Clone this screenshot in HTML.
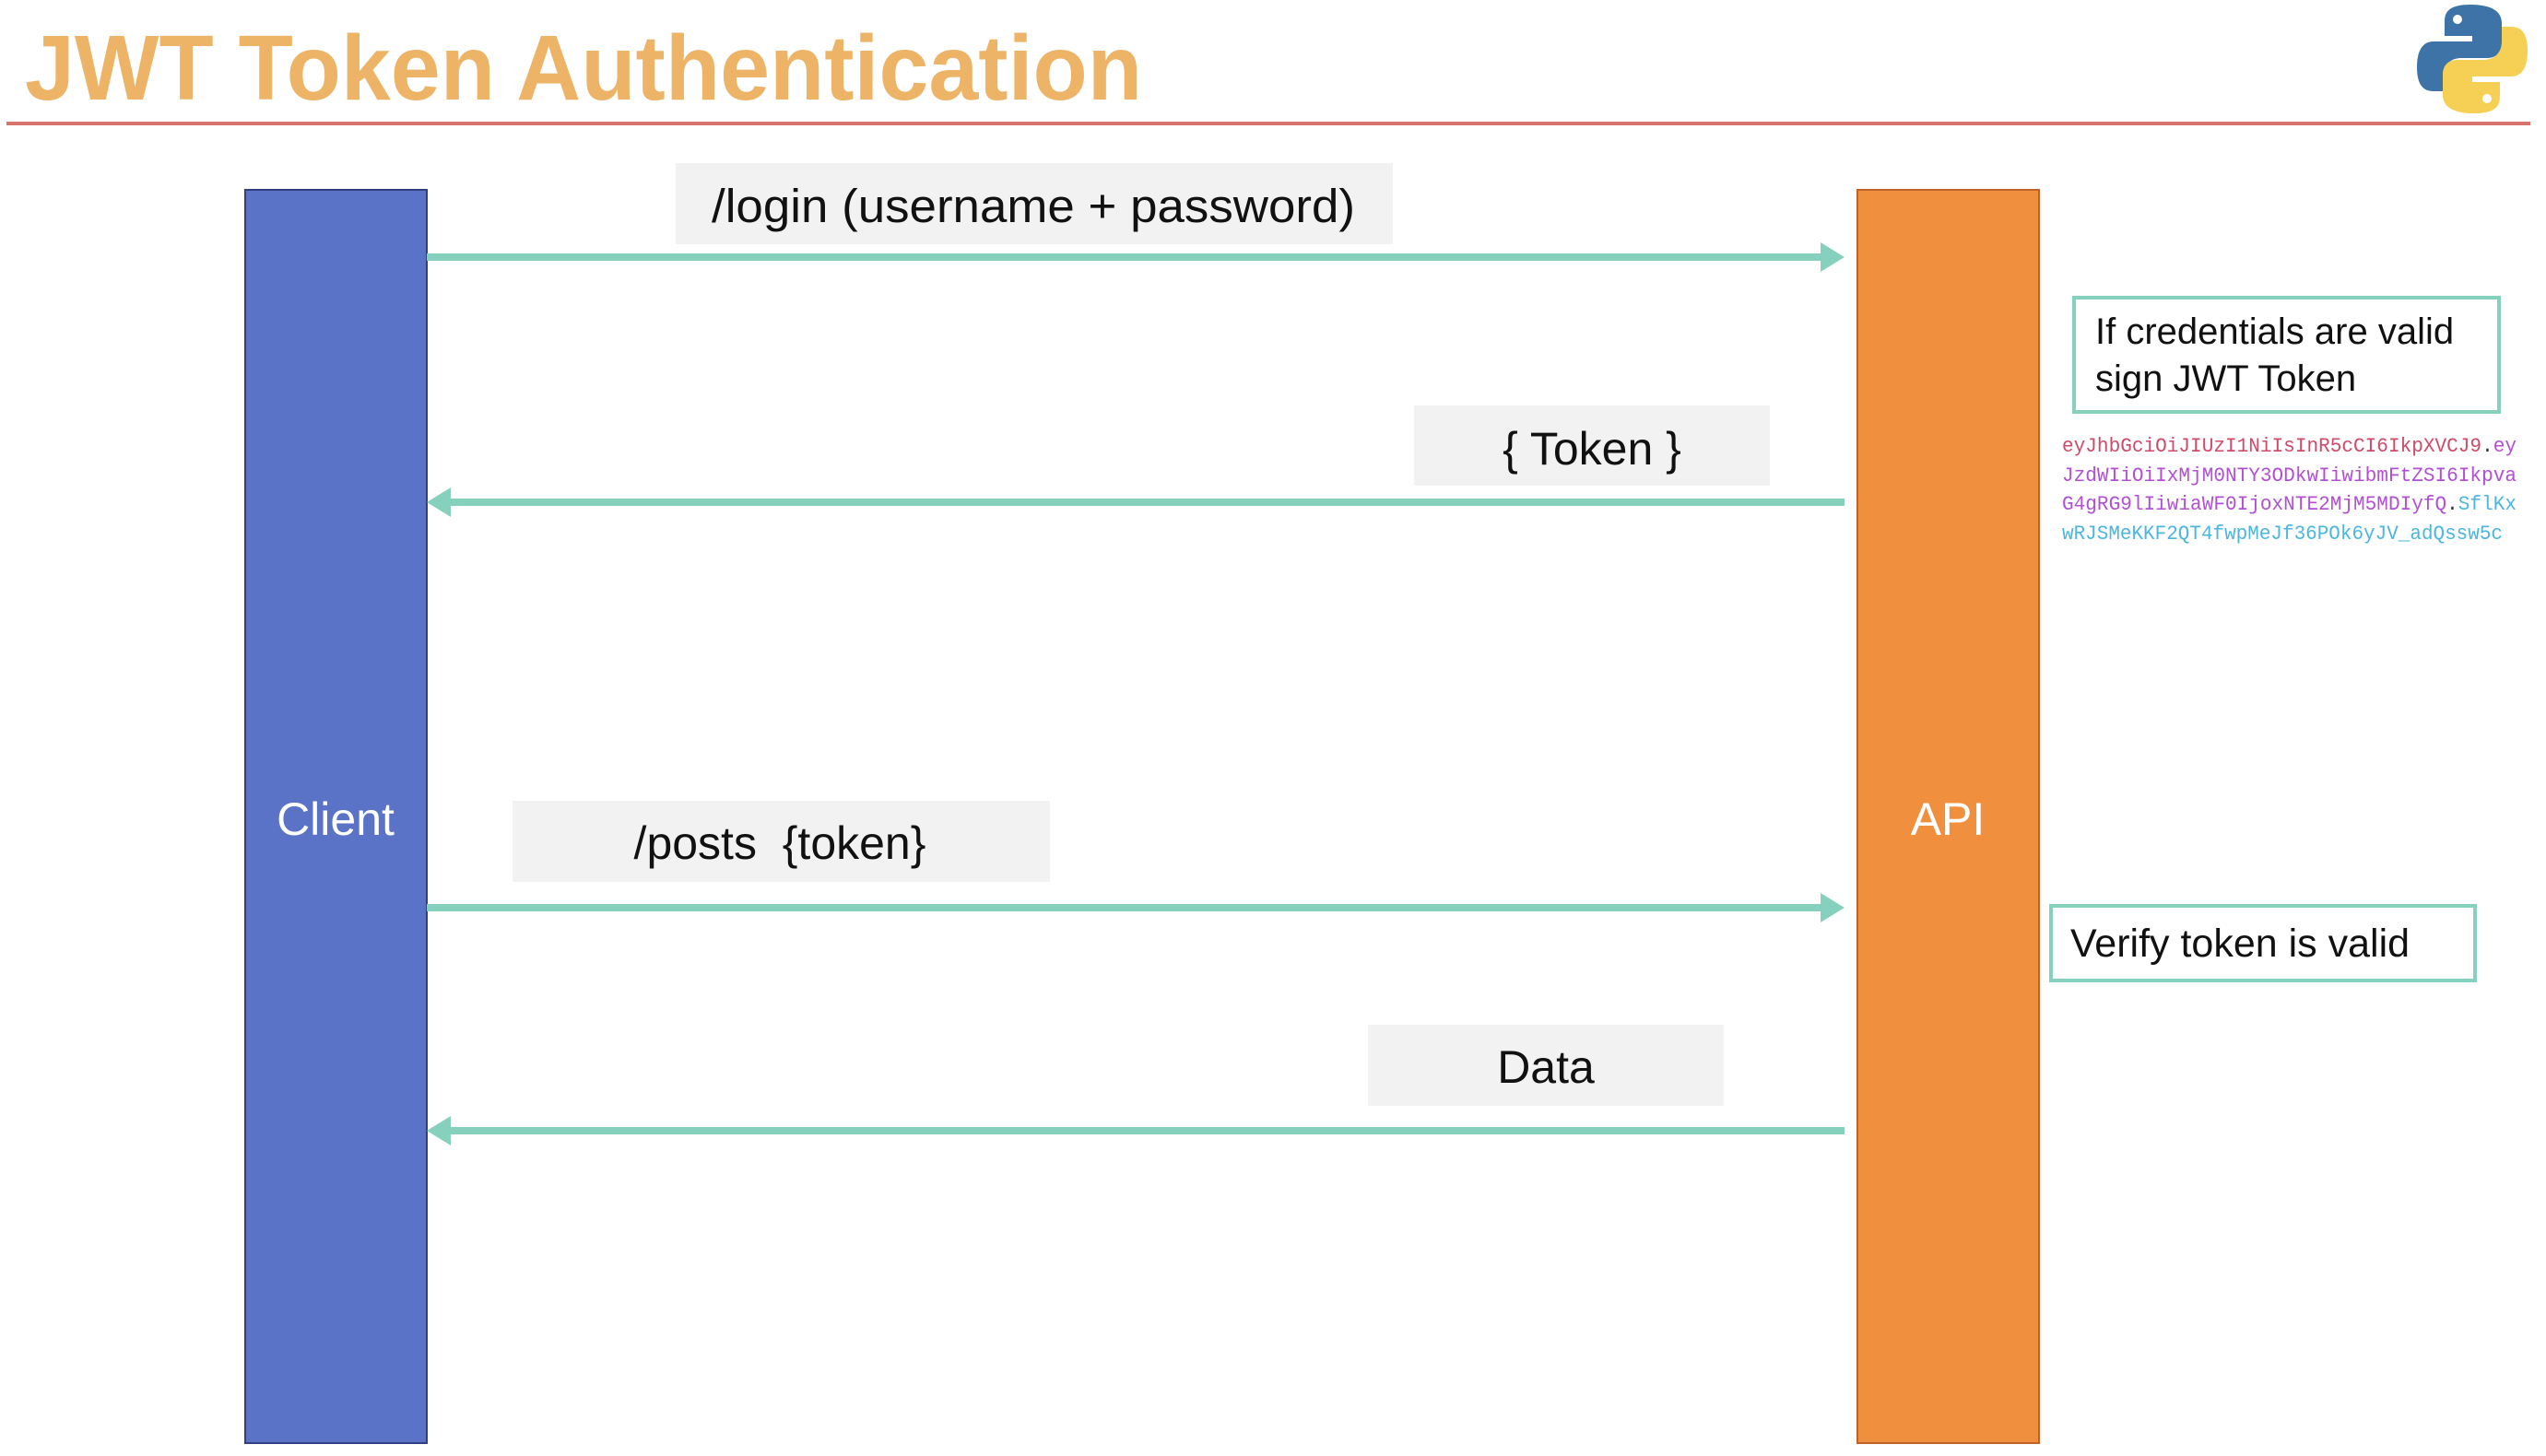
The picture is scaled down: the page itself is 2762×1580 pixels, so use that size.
<!DOCTYPE html>
<html><head><meta charset="utf-8"><style>
html,body{margin:0;padding:0;background:#fff;}
svg{display:block}
</style></head><body>
<svg width="2762" height="1580" viewBox="0 0 2762 1580" xmlns="http://www.w3.org/2000/svg">
<rect width="2762" height="1580" fill="#fff"/>
<text x="27" y="108" font-family="Liberation Sans, sans-serif" font-weight="bold" font-size="100" fill="#EDB467" textLength="1212" lengthAdjust="spacingAndGlyphs">JWT Token Authentication</text>
<rect x="7" y="132" width="2738" height="4" fill="#D8736E"/>
<!-- python logo -->
<g transform="translate(2622,5) scale(1.0)">
<path d="M58 0 C30 0 30 12 30 20 V34 H60 V40 H18 C6 40 0 50 0 68 C0 86 6 94 18 94 H28 V78 C28 66 36 58 48 58 H76 C86 58 92 52 92 42 V20 C92 8 82 0 58 0 Z" fill="#3E73A8"/>
<circle cx="44" cy="16" r="5" fill="#fff"/>
<path d="M62 118 C90 118 90 106 90 98 V84 H60 V78 H102 C114 78 120 68 120 50 C120 32 114 24 102 24 H92 V40 C92 52 84 60 72 60 H44 C34 60 28 66 28 76 V98 C28 110 38 118 62 118 Z" fill="#F6CF55"/>
<circle cx="76" cy="102" r="5" fill="#fff"/>
</g>
<!-- bars -->
<rect x="266" y="206" width="197" height="1360" fill="#5B73C6" stroke="#2F3F80" stroke-width="2"/>
<rect x="2015" y="206" width="197" height="1360" fill="#F0903F" stroke="#C0622A" stroke-width="2"/>
<text x="364" y="906" text-anchor="middle" font-family="Liberation Sans, sans-serif" font-size="50" fill="#fff">Client</text>
<text x="2113" y="906" text-anchor="middle" font-family="Liberation Sans, sans-serif" font-size="50" fill="#fff">API</text>
<!-- label boxes -->
<rect x="733" y="177" width="778" height="88" fill="#F2F2F2"/>
<text x="772" y="241" font-family="Liberation Sans, sans-serif" font-size="51" fill="#111" textLength="698" lengthAdjust="spacingAndGlyphs">/login (username + password)</text>
<rect x="1534" y="440" width="386" height="87" fill="#F2F2F2"/>
<text x="1727" y="504" text-anchor="middle" font-family="Liberation Sans, sans-serif" font-size="50" fill="#111">{ Token }</text>
<rect x="556" y="869" width="583" height="88" fill="#F2F2F2"/>
<text x="846" y="932" text-anchor="middle" font-family="Liberation Sans, sans-serif" font-size="50" fill="#111" xml:space="preserve">/posts  {token}</text>
<rect x="1484" y="1112" width="386" height="88" fill="#F2F2F2"/>
<text x="1677" y="1175" text-anchor="middle" font-family="Liberation Sans, sans-serif" font-size="50" fill="#111">Data</text>
<!-- arrows -->
<g fill="#86D0BE">
<rect x="463" y="275" width="1525" height="8"/><polygon points="1975,263 2001,279 1975,295"/>
<rect x="489" y="541" width="1512" height="8"/><polygon points="489,529 463,545 489,561"/>
<rect x="463" y="981" width="1525" height="8"/><polygon points="1975,969 2001,985 1975,1001"/>
<rect x="489" y="1223" width="1512" height="8"/><polygon points="489,1211 463,1227 489,1243"/>
</g>
<!-- right boxes -->
<rect x="2250" y="323" width="461" height="124" fill="none" stroke="#86D0BE" stroke-width="4"/>
<text x="2273" y="373" font-family="Liberation Sans, sans-serif" font-size="40" fill="#111">If credentials are valid</text>
<text x="2273" y="424" font-family="Liberation Sans, sans-serif" font-size="40" fill="#111">sign JWT Token</text>
<g font-family="Liberation Mono, monospace" font-size="22">
<text x="2237" y="490" textLength="493" lengthAdjust="spacingAndGlyphs"><tspan fill="#D04A6A">eyJhbGciOiJIUzI1NiIsInR5cCI6IkpXVCJ9</tspan><tspan fill="#333">.</tspan><tspan fill="#B34FD5">ey</tspan></text>
<text x="2237" y="522" textLength="493" lengthAdjust="spacingAndGlyphs" fill="#B34FD5">JzdWIiOiIxMjM0NTY3ODkwIiwibmFtZSI6Ikpva</text>
<text x="2237" y="553" textLength="493" lengthAdjust="spacingAndGlyphs"><tspan fill="#B34FD5">G4gRG9lIiwiaWF0IjoxNTE2MjM5MDIyfQ</tspan><tspan fill="#333">.</tspan><tspan fill="#4BB7E0">SflKx</tspan></text>
<text x="2237" y="585" textLength="478" lengthAdjust="spacingAndGlyphs" fill="#4BB7E0">wRJSMeKKF2QT4fwpMeJf36POk6yJV_adQssw5c</text>
</g>
<rect x="2225" y="983" width="460" height="81" fill="none" stroke="#86D0BE" stroke-width="4"/>
<text x="2246" y="1038" font-family="Liberation Sans, sans-serif" font-size="43" fill="#111">Verify token is valid</text>
</svg>
</body></html>
